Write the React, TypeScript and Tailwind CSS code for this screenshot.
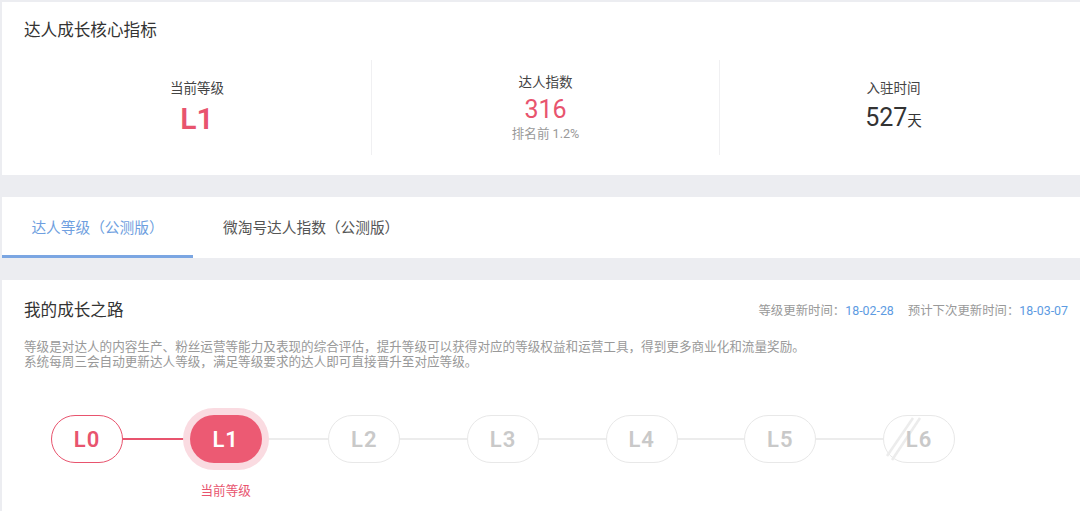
import React from "react";

const levels = ["L0", "L1", "L2", "L3", "L4", "L5", "L6"];

const Stat = ({ label, children, first }: { label: string; children: React.ReactNode; first?: boolean }) => (
  <div className={`flex flex-col items-center justify-center h-[95px] ${first ? "" : "border-l border-[#f0f0f2]"}`}>
    <p className="text-[13.5px] leading-[18px] text-[#444]">{label}</p>
    {children}
  </div>
);

const LevelPill = ({ name, index }: { name: string; index: number }) => {
  const current = index === 1;
  const done = index === 0;
  const locked = index === 6;
  let cls = "border border-[#e8e8e8] bg-white text-[#c9c9c9]";
  if (done) cls = "border border-[#e8546e] bg-white text-[#e8546e]";
  if (current) cls = "bg-[#ec5a73] text-white ring-[7px] ring-[#fadbe1]";
  return (
    <div
      className={`relative w-[72px] h-[48px] rounded-[24px] flex items-center justify-center text-[22px] font-semibold tracking-[1px] ${cls}`}
    >
      {locked && (
        <svg className="absolute left-0 top-0" width="72" height="48" viewBox="0 0 72 48">
          <line x1="8" y1="44" x2="36" y2="2" stroke="#ececec" strokeWidth="2.5" />
          <line x1="3" y1="40" x2="29" y2="2" stroke="#ececec" strokeWidth="2.5" />
        </svg>
      )}
      <span className="relative">{name}</span>
    </div>
  );
};

export default function App() {
  return (
    <div
      className="min-h-[511px] bg-[#ecedf1] pl-[2px] pt-[2px] overflow-hidden"
      style={{ fontFamily: "Roboto, 'Noto Sans CJK SC', sans-serif" }}
    >
      {/* core metrics */}
      <div className="bg-white h-[173px] pt-[18px]">
        <h2 className="pl-[22px] text-[16.6px] leading-[22px] text-[#333]">达人成长核心指标</h2>
        <div className="grid grid-cols-3 ml-[21px] w-[1044px] mt-[18px]">
          <Stat label="当前等级" first>
            <p className="mt-[5px] text-[30px] leading-[34px] font-semibold text-[#e8546e]">L1</p>
          </Stat>
          <Stat label="达人指数">
            <p className="mt-[3px] text-[25px] leading-[32px] text-[#e8546e]">316</p>
            <p className="text-[12.6px] leading-[16px] text-[#999]">排名前 1.2%</p>
          </Stat>
          <Stat label="入驻时间">
            <p className="mt-[6px] text-[25px] leading-[30px] text-[#333]">
              527<span className="text-[14.5px]">天</span>
            </p>
          </Stat>
        </div>
      </div>

      {/* tabs */}
      <div className="bg-white mt-[22px] h-[61px] flex items-stretch">
        <div className="w-[191px] flex items-center justify-center border-b-[3px] border-[#7ba6e2] pt-[4px] text-[14.7px] text-[#6f9fe0]">
          达人等级（公测版）
        </div>
        <div className="ml-[30px] pt-[1px] flex items-center text-[14.7px] text-[#555]">微淘号达人指数（公测版）</div>
      </div>

      {/* growth path */}
      <div className="bg-white mt-[22px] pt-[20px] pb-[20px]">
        <div className="flex items-center justify-between pl-[22px] pr-[12px]">
          <h2 className="text-[16.6px] leading-[22px] text-[#333]">我的成长之路</h2>
          <p className="text-[12.4px] text-[#999]">
            等级更新时间：<span className="text-[#5d9be2]">18-02-28</span>
            <span className="ml-[14px]">预计下次更新时间：</span>
            <span className="text-[#5d9be2]">18-03-07</span>
          </p>
        </div>
        <div className="pl-[22px] mt-[17px] text-[12.6px] leading-[15px] text-[#999]">
          <p>等级是对达人的内容生产、粉丝运营等能力及表现的综合评估，提升等级可以获得对应的等级权益和运营工具，得到更多商业化和流量奖励。</p>
          <p>系统每周三会自动更新达人等级，满足等级要求的达人即可直接晋升至对应等级。</p>
        </div>

        <div className="ml-[49px] w-[904px] mt-[46px] grid grid-cols-[72px_1fr_72px_1fr_72px_1fr_72px_1fr_72px_1fr_72px_1fr_72px] items-center">
          {levels.map((lv, i) => (
            <React.Fragment key={lv}>
              {i > 0 && <div className={`h-[2px] ${i === 1 ? "bg-[#e8546e]" : "bg-[#ececec]"}`} />}
              <LevelPill name={lv} index={i} />
            </React.Fragment>
          ))}
          <div className="col-start-3 mt-[19px] text-center text-[12.6px] leading-[17px] text-[#e8546e] whitespace-nowrap">
            当前等级
          </div>
        </div>
      </div>
    </div>
  );
}
